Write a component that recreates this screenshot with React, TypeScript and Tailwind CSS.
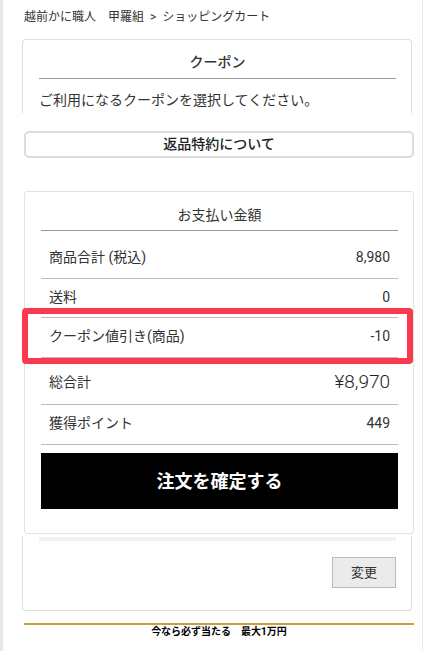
const FONT = "font-['Roboto','Noto_Sans_CJK_JP',sans-serif]";

const ROWS = [
  { label: '商品合計 (税込)', value: '8,980', cls: 'pt-4 pb-[11px] border-b border-[#bcbcbc]' },
  { label: '送料', value: '0', cls: 'pt-2 pb-[10px] border-b border-[#bcbcbc]' },
];

function PaymentCard() {
  return (
    <div className="ml-[21px] w-[390px] h-[343px] border border-[#e3e3e3] rounded-[3px] bg-white pl-4 pr-[15px]">
      <div className="pt-[13px] text-center text-[14px] leading-[20px] text-[#333]">お支払い金額</div>
      <div className="mt-[5px] border-b border-[#999]" />

      {ROWS.map((r) => (
        <div key={r.label} className={`flex justify-between px-2 text-[14px] leading-[20px] text-[#333] ${r.cls}`}>
          <span className="whitespace-pre">{r.label}</span>
          <span>{r.value}</span>
        </div>
      ))}

      {/* クーポン行 + 赤枠 */}
      <div className="relative flex justify-between px-2 pt-2 pb-[11px] text-[14px] leading-[20px] text-[#333] border-b-[3px] border-double border-[#bcbcbc]">
        <span>クーポン値引き(商品)</span>
        <span>-10</span>
        <div className="absolute top-[-10px] bottom-[-7px] left-[-19px] right-[-15px] border-[6px] border-[#f93a4e] rounded-[4px]" />
      </div>

      <div className="flex justify-between items-center px-2 pt-[10px] pb-[10px] border-b border-[#bcbcbc] text-[#333]">
        <span className="text-[14px] leading-[24px]">総合計</span>
        <span className="text-[19px] leading-[24px] font-light text-[#222]">¥8,970</span>
      </div>
      <div className="flex justify-between px-2 pt-2 pb-[11px] border-b border-[#bcbcbc] text-[14px] leading-[20px] text-[#333]">
        <span>獲得ポイント</span>
        <span>449</span>
      </div>

      <button className="mt-2 w-full h-[56px] bg-black text-white text-[18px] font-bold">注文を確定する</button>
    </div>
  );
}

export default function App() {
  return (
    <div className={`${FONT} w-[435px] h-[651px] flex bg-white overflow-hidden`}>
      <div className="w-[3px] h-full bg-[#e7e7ef]" />
      <div className="w-[420px] h-full border-r border-[#ececec] pt-2">
        <div className="ml-[21px] text-[12px] leading-[18px] text-[#333] whitespace-pre">越前かに職人　甲羅組  &gt;  ショッピングカート</div>

        {/* クーポン (背面カード 上部) */}
        <div className="mt-[13px] ml-[19px] w-[390px] h-[74px] border border-b-0 border-[#dedede] rounded-t-[4px] pl-4 pr-[15px]">
          <div className="pt-3 text-center text-[14px] leading-[20px] font-medium text-[#333]">クーポン</div>
          <div className="mt-[6px] border-b border-[#999]" />
          <div className="mt-[11px] text-[14px] leading-[20px] text-[#333]">ご利用になるクーポンを選択してください。</div>
        </div>

        {/* 前面 */}
        <div className="bg-white pt-[18px] pb-[2px]">
          <button className="ml-[21px] w-[390px] h-[27px] border-2 border-[#dcdcdc] rounded-[5px] text-[14px] font-medium text-[#222]">
            返品特約について
          </button>
          <div className="mt-[33px]">
            <PaymentCard />
          </div>
        </div>

        {/* 背面カード 下部 */}
        <div className="ml-[19px] w-[390px] h-[75px] border border-t-0 border-[#dedede] rounded-b-[4px] pl-4 pr-[15px] flex flex-col">
          <div className="mt-px h-[4px] bg-[#f2f2f2]" />
          <div className="mt-4 flex justify-end">
            <button className="w-[64px] h-[31px] bg-[#ebebeb] border border-[#bdbdbd] text-[13px] text-[#333]">変更</button>
          </div>
        </div>

        <div className="mt-3 ml-[21px] w-[390px] border-t-2 border-[#c6a13c]" />
        <div className="ml-[21px] w-[390px] text-center text-[10px] leading-[14px] font-bold text-black">今なら必ず当たる　最大1万円</div>
      </div>
    </div>
  );
}
